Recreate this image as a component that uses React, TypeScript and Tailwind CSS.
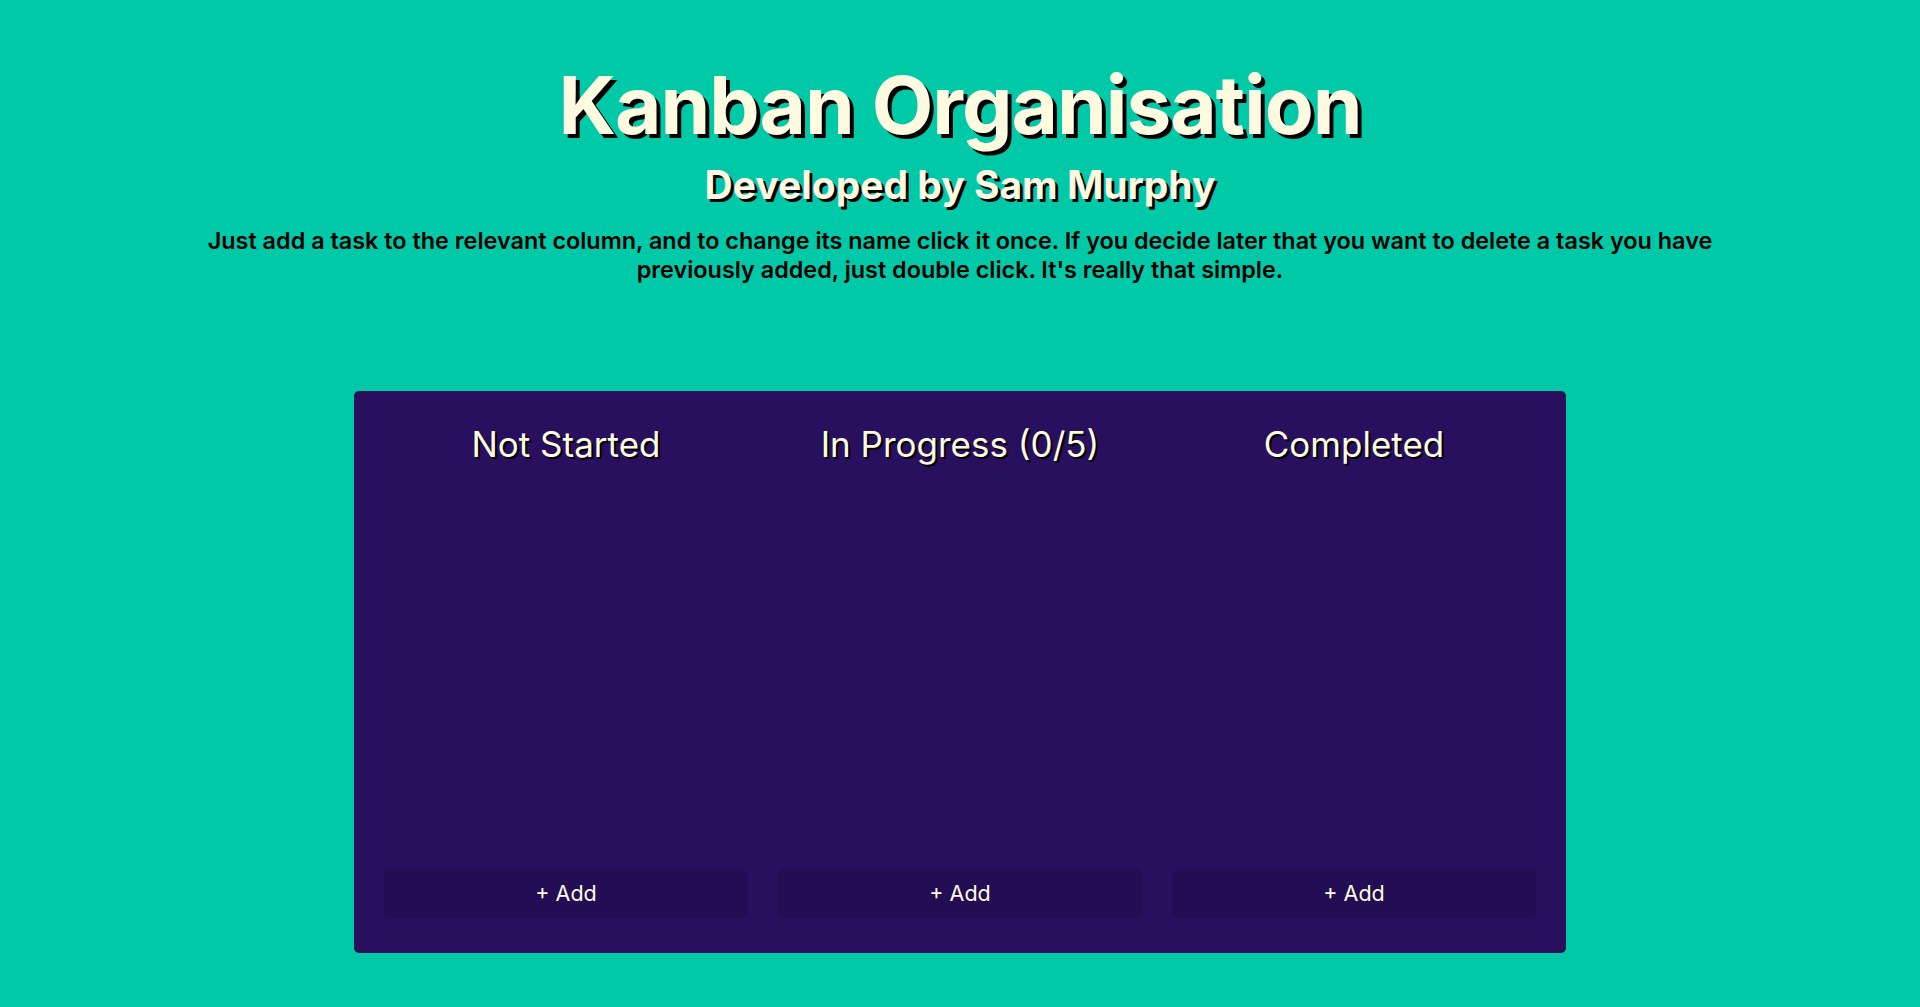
import React from 'react'

const columns = [
  { id: 'not-started', title: 'Not Started' },
  { id: 'in-progress', title: 'In Progress (0/5)' },
  { id: 'completed', title: 'Completed' },
]

function Column({ title }: { title: string }) {
  return (
    <div className="flex flex-col">
      <h2 className="text-center text-[35px] leading-[1.2] font-normal text-[#fffbe0] [text-shadow:2px_2px_0_#000] mt-[32px]">
        {title}
      </h2>
      <div className="flex-1" />
      <button className="h-[49px] w-full rounded-md bg-[#230e55] text-[21.5px] text-[#fffbe0]">
        + Add
      </button>
    </div>
  )
}

export default function App() {
  return (
    <div className="min-h-screen bg-[#00c9a8] font-['Inter',sans-serif] flex flex-col items-center">
      <header className="text-center pt-[65px]">
        <h1 className="text-[80px] leading-none font-bold tracking-[-1px] text-[#fffbe0] [text-shadow:4px_4px_0_#000]">
          Kanban Organisation
        </h1>
        <p className="mt-[20px] text-[39px] leading-none font-bold text-[#fffbe0] [text-shadow:3px_3px_0_#000]">
          Developed by Sam Murphy
        </p>
        <p className="mt-[22px] max-w-[1530px] mx-auto text-[23.4px] leading-[29px] font-semibold text-black">
          Just add a task to the relevant column, and to change its name click it once. If you decide later that you
          want to delete a task you have previously added, just double click. It's really that simple.
        </p>
      </header>

      <main className="mt-[107px] w-[1212px] h-[562px] rounded-[5px] bg-[#29105e] px-[30px] pb-[35px] grid grid-cols-3 gap-[30px]">
        {columns.map(c => (
          <Column key={c.id} title={c.title} />
        ))}
      </main>
    </div>
  )
}
